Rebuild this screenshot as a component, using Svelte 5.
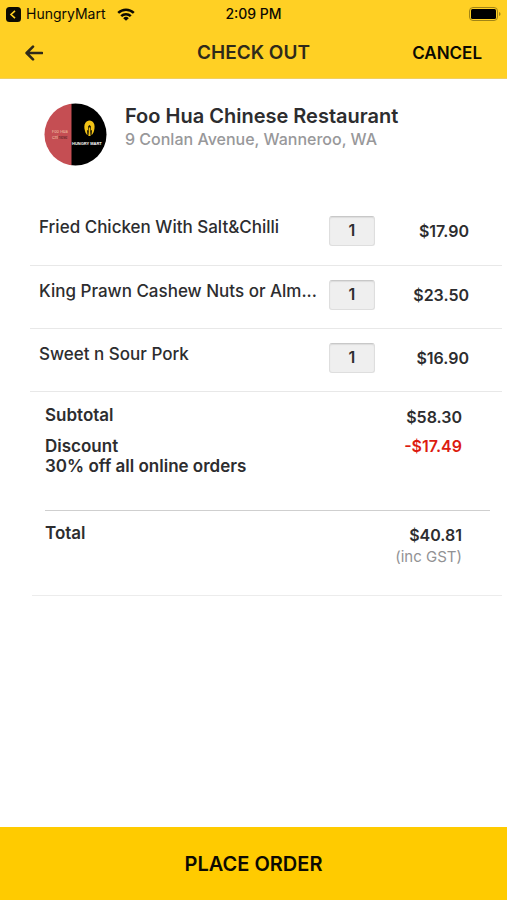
<script lang="ts">
  const restaurant = {
    name: 'Foo Hua Chinese Restaurant',
    address: '9 Conlan Avenue, Wanneroo, WA'
  };

  let items = $state([
    { name: 'Fried Chicken With Salt&Chilli', qty: 1, price: '$17.90' },
    { name: 'King Prawn Cashew Nuts or Alm...', qty: 1, price: '$23.50' },
    { name: 'Sweet n Sour Pork', qty: 1, price: '$16.90' }
  ]);
</script>

<div class="screen">
  <header>
    <div class="status">
      <a class="back-to-app" href="#hungrymart">
        <svg width="15" height="15" viewBox="0 0 15 15" aria-hidden="true">
          <rect width="15" height="15" rx="3.5" fill="#0c0a02" />
          <path d="M9 3.8 5 7.5l4 3.7" fill="none" stroke="#ffd024" stroke-width="1.6" />
        </svg>
        <span>HungryMart</span>
      </a>
      <svg class="wifi" width="18" height="13" viewBox="0 0 18 13" aria-hidden="true">
        <g fill="none" stroke="#0c0a02" stroke-width="2.5">
          <path d="M1.2 4.9a11.2 11.2 0 0 1 15.6 0" />
          <path d="M4.2 8.2a6.9 6.9 0 0 1 9.6 0" />
        </g>
        <path d="M9 12.8 6.2 10.2a4 4 0 0 1 5.6 0z" fill="#0c0a02" />
      </svg>
      <span class="time">2:09 PM</span>
      <svg class="battery" width="32" height="14" viewBox="0 0 32 14" aria-hidden="true">
        <rect x="0.5" y="0.5" width="28" height="13" rx="3.5" fill="none" stroke="#a18416" />
        <rect x="2" y="2" width="25" height="10" rx="1.5" fill="#000" />
        <path d="M30 5v4q1.6-.6 1.6-2T30 5z" fill="#a18416" />
      </svg>
    </div>
    <nav>
      <button class="back" type="button" aria-label="Back">
        <svg width="18" height="16" viewBox="0 0 18 16" aria-hidden="true">
          <path d="M8 1.6 1.6 8 8 14.4M2 8h15" fill="none" stroke="#2f2a1a" stroke-width="2.6" stroke-linecap="round" stroke-linejoin="round" />
        </svg>
      </button>
      <h1>CHECK OUT</h1>
      <button class="cancel" type="button">CANCEL</button>
    </nav>
  </header>

  <main>
    <section class="restaurant">
      <svg class="logo" width="63" height="63" viewBox="0 0 63 63" aria-hidden="true">
        <defs>
          <clipPath id="logo-clip"><circle cx="31.5" cy="31.5" r="31" /></clipPath>
        </defs>
        <g clip-path="url(#logo-clip)">
          <rect width="28" height="63" fill="#c54e53" />
          <rect x="27.5" width="36" height="63" fill="#000" />
          <text x="8" y="30" class="tiny" fill="#f2c9a8">Foo Hua</text>
          <text x="8" y="36" class="tiny" fill="#f2c9a8">Chi<tspan fill="#451a1c">nese</tspan></text>
          <path d="M41 28c-2-7 1-10.5 4.5-10.5S52 21 50 28c-.8 2.5-2 4-2.500 4.200l.4-5h-4.800l.4 5C42.500 31.500 41.500 30 41 28z" fill="#f3c316" />
          <path d="M44.200 23.500q1.300-3 2.600 0v4h-2.600z" fill="#1c1600" />
          <path d="M45 24.500h1l.6 8.500h-2.200z" fill="#f3c316" />
          <text x="28" y="42" class="brand" fill="#fff">HUNGRY MART</text>
        </g>
      </svg>
      <div>
        <h2>{restaurant.name}</h2>
        <p>{restaurant.address}</p>
      </div>
    </section>

    <table>
      <tbody>
        {#each items as item, i}
          <tr>
            <td class="name"><label for="qty-{i}">{item.name}</label></td>
            <td class="qty"><input id="qty-{i}" type="text" inputmode="numeric" bind:value={item.qty} /></td>
            <td class="price">{item.price}</td>
          </tr>
        {/each}
      </tbody>
    </table>

    <dl>
      <div class="line">
        <dt>Subtotal</dt>
        <dd>$58.30</dd>
      </div>
      <div class="line discount">
        <dt>Discount<br />30% off all online orders</dt>
        <dd>-$17.49</dd>
      </div>
      <div class="line total">
        <dt>Total</dt>
        <dd>$40.81 <small>(inc GST)</small></dd>
      </div>
    </dl>
  </main>

  <button class="place-order" type="button">PLACE ORDER</button>
</div>

<style>
  :global(body) {
    margin: 0;
    background: #fff;
  }

  .screen {
    display: flex;
    flex-direction: column;
    min-height: 100vh;
    font-family: Inter, "Open Sans", sans-serif;
    font-size: 16px;
    line-height: 20px;
    color: #2d2d2f;
  }

  h1, h2, p, dl, dd {
    margin: 0;
  }

  button {
    padding: 0;
    border: 0;
    background: none;
    font: inherit;
    color: inherit;
    cursor: pointer;
  }

  header {
    background: #ffd024;
    border-bottom: 1px solid #f0cf62;
  }

  .status {
    display: grid;
    grid-template-columns: 108px 1fr auto 1fr 108px;
    align-items: center;
    height: 28px;
    padding: 0 6px;
    font-size: 14px;
    color: #0c0a02;
  }

  .back-to-app {
    display: flex;
    align-items: center;
    gap: 5px;
    color: inherit;
    text-decoration: none;
  }

  .wifi {
    margin-left: 3px;
  }

  .time {
    font-weight: 500;
  }

  .battery {
    grid-column: 5;
    justify-self: end;
  }

  nav {
    display: grid;
    grid-template-columns: 1fr auto 1fr;
    align-items: center;
    height: 50px;
    padding: 0 25px;
  }

  .back {
    display: flex;
    justify-self: start;
  }

  h1 {
    font-size: 19px;
    font-weight: 600;
    color: #2f2a1a;
  }

  .cancel {
    justify-self: end;
    font-size: 17px;
    font-weight: 600;
    color: #0c0a02;
  }

  .restaurant {
    display: flex;
    gap: 18px;
    padding: 24px 44px 36px;
  }

  .logo {
    flex: none;
  }

  .tiny {
    font-size: 4px;
  }

  .brand {
    font-family: "Liberation Sans", sans-serif;
    font-size: 4px;
    font-weight: 700;
  }

  h2 {
    font-size: 20px;
    line-height: 26px;
    font-weight: 600;
  }

  p {
    font-weight: 500;
    color: #98989a;
  }

  table {
    width: calc(100% - 35px);
    margin-left: 30px;
    border-collapse: collapse;
    table-layout: fixed;
  }

  td {
    box-sizing: border-box;
    height: 63px;
    padding: 0;
    border-bottom: 1px solid #e8e8e8;
    vertical-align: top;
  }

  .name {
    padding: 15px 0 0 9px;
    font-size: 17px;
    font-weight: 500;
    white-space: nowrap;
  }

  .qty {
    width: 46px;
    padding-top: 14px;
  }

  .qty input {
    display: block;
    box-sizing: border-box;
    width: 46px;
    height: 30px;
    padding: 0 0 2px;
    border: 1px solid #dedede;
    border-top-color: #c8c8c8;
    border-radius: 3px;
    background: #efefef;
    box-shadow: inset 0 1px 1px #dcdcdc;
    font: inherit;
    font-weight: 600;
    color: inherit;
    text-align: center;
  }

  .price {
    width: 127px;
    padding: 19px 33px 0 0;
    font-weight: 600;
    text-align: right;
  }

  dl {
    margin: 0 5px 0 32px;
    padding: 13px 12px 28px 13px;
    border-bottom: 1px solid #ececec;
    font-weight: 600;
  }

  .line {
    display: flex;
    justify-content: space-between;
    padding-right: 28px;
  }

  dt {
    font-size: 17px;
  }

  .line dd {
    padding-top: 2px;
    text-align: right;
  }

  .discount {
    padding-top: 9px;
    padding-bottom: 34px;
  }

  .discount dd {
    padding-top: 0;
    color: #dc1c10;
  }

  .total {
    padding-top: 12px;
    border-top: 1px solid #cfcfcf;
  }

  small {
    display: block;
    padding-top: 2px;
    font-size: 15px;
    font-weight: 400;
    color: #929294;
  }

  .place-order {
    height: 73px;
    margin-top: auto;
    background: #ffcb00;
    font-size: 20px;
    font-weight: 600;
    color: #0c0a02;
  }
</style>
